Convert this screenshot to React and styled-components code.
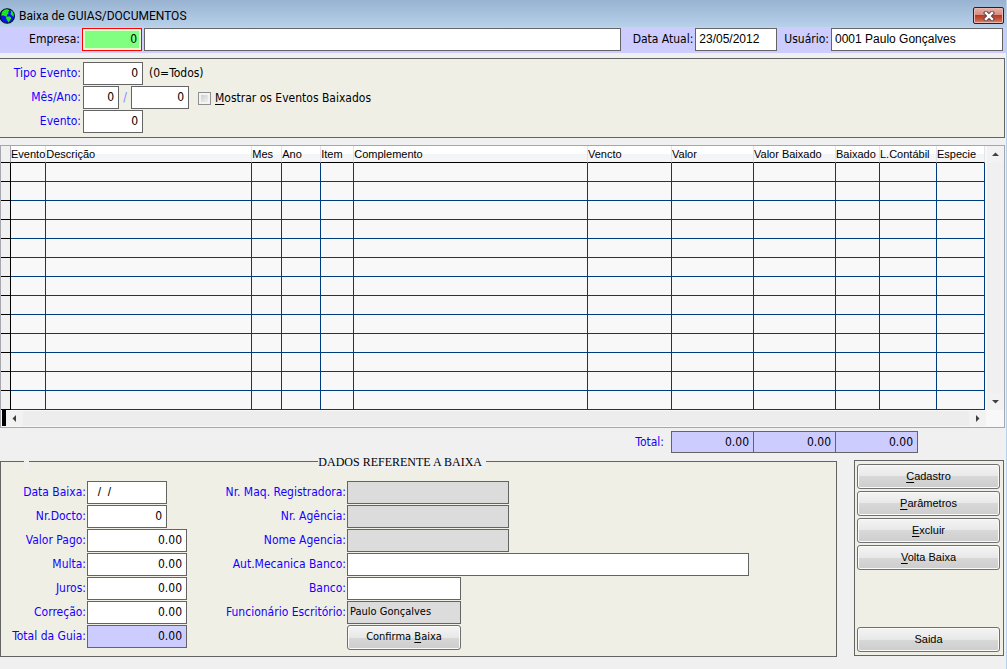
import React from 'react';
import styled, { createGlobalStyle } from 'styled-components';

const COLORS = {
  window: '#f0f0f0',
  panel: '#efefe6',
  lavender: '#ccccff',
  border: '#646464',
  label: '#1400ff',
  gridLine: '#003c7d',
  disabled: '#dcdcdc',
};

const FONTS = {
  ui: "'DejaVu Sans Condensed', 'DejaVu Sans', sans-serif",
  title: "Roboto, 'Noto Sans', sans-serif",
  arial: "'Liberation Sans', Arial, sans-serif",
  serif: "'Liberation Serif', 'Times New Roman', serif",
};

const COLUMNS = [
  { title: 'Evento', width: 35 },
  { title: 'Descrição', width: 206 },
  { title: 'Mes', width: 30 },
  { title: 'Ano', width: 39 },
  { title: 'Item', width: 33 },
  { title: 'Complemento' },
  { title: 'Vencto', width: 84 },
  { title: 'Valor', width: 82 },
  { title: 'Valor Baixado', width: 82 },
  { title: 'Baixado', width: 44 },
  { title: 'L.Contábil', width: 57 },
  { title: 'Especie', width: 48 },
];

const ROWS = Array.from({ length: 13 }, (_, i) => i);

const PAYMENT_FIELDS = [
  { id: 'data-baixa', label: 'Data Baixa:', value: '  /  /', width: 80, font: 'arial' },
  { id: 'nr-docto', label: 'Nr.Docto:', value: '0', width: 80, align: 'right' },
  { id: 'valor-pago', label: 'Valor Pago:', value: '0.00', width: 100, align: 'right' },
  { id: 'multa', label: 'Multa:', value: '0.00', width: 100, align: 'right' },
  { id: 'juros', label: 'Juros:', value: '0.00', width: 100, align: 'right' },
  { id: 'correcao', label: 'Correção:', value: '0.00', width: 100, align: 'right' },
  { id: 'total-guia', label: 'Total da Guia:', value: '0.00', width: 100, align: 'right', tone: 'total', readOnly: true },
];

const BANK_FIELDS = [
  { id: 'nr-maq', label: 'Nr. Maq. Registradora:', width: 162, tone: 'disabled', readOnly: true },
  { id: 'nr-agencia', label: 'Nr. Agência:', width: 162, tone: 'disabled', readOnly: true },
  { id: 'nome-agencia', label: 'Nome Agencia:', width: 162, tone: 'disabled', readOnly: true },
  { id: 'aut-mecanica', label: 'Aut.Mecanica Banco:' },
  { id: 'banco', label: 'Banco:', width: 114 },
  { id: 'funcionario', label: 'Funcionário Escritório:', value: 'Paulo Gonçalves', width: 114, tone: 'disabled', small: true, readOnly: true },
];

const Field = ({ id, label, labelWidth, value = '', ...rest }) => (
  <FieldRow>
    <Label htmlFor={id} $width={labelWidth}>{label}</Label>
    <TextBox id={id} value={value} {...rest} />
  </FieldRow>
);

const TextBox = ({ id, value = '', width, align, tone, font, small, readOnly, ...rest }) => (
  <Input
    id={id}
    type="text"
    defaultValue={value}
    readOnly={readOnly}
    $width={width}
    $align={align}
    $tone={tone}
    $font={font}
    $small={small}
    {...rest}
  />
);

const Globe = () => (
  <GlobeSvg viewBox="0 0 16 16" aria-hidden="true">
    <circle cx="7.2" cy="8" r="7.2" fill="#0a14f0" stroke="#001030" strokeWidth="1.2" />
    <path d="M2 4 L4.6 1.6 L8 1.2 L9.4 2.4 L8.2 4 L8.6 5.4 L6.8 7 L7.4 8.6 L5.6 8.4 L3.6 7.6 L1.2 7.4 Z" fill="#1ee61e" />
    <path d="M6.4 8.4 L10 8.6 L11.4 10.2 L10 12.6 L8.4 14.6 L7.4 12.4 L6 10.6 Z" fill="#1ee61e" />
    <path d="M10.4 2 L12.6 3.6 L13.8 6.4 L13.6 9 L12 7.6 L10.4 6 L11.2 4.4 Z" fill="#1ee61e" />
  </GlobeSvg>
);

const Arrow = ({ points }) => (
  <svg width="7" height="7" viewBox="0 0 7 7" aria-hidden="true">
    <polygon points={points} fill="#404040" />
  </svg>
);

const App = () => (
  <>
    <GlobalStyle />
    <Window>
      <TitleBar>
        <Globe />
        <Title>Baixa de GUIAS/DOCUMENTOS</Title>
        <CloseButton type="button" aria-label="Fechar">
          <svg width="12" height="10" viewBox="0 0 12 10" aria-hidden="true">
            <path d="M3 2 L9 8 M9 2 L3 8" stroke="#5a4650" strokeWidth="4.4" strokeLinecap="square" />
            <path d="M3 2 L9 8 M9 2 L3 8" stroke="#ffffff" strokeWidth="2.4" strokeLinecap="square" />
          </svg>
        </CloseButton>
      </TitleBar>

      <CompanyBar>
        <Label htmlFor="empresa" $width={80} $dark>Empresa:</Label>
        <ActiveInput id="empresa" type="text" defaultValue="0" />
        <TextBox id="empresa-nome" aria-label="Nome da empresa" />
        <BarGroup $offset={10}>
          <Label htmlFor="data-atual" $dark>Data Atual:</Label>
          <TextBox id="data-atual" value="23/05/2012" width={82} font="arial" />
        </BarGroup>
        <BarGroup $offset={5}>
          <Label htmlFor="usuario" $dark>Usuário:</Label>
          <TextBox id="usuario" value="0001 Paulo Gonçalves" width={172} font="arial" />
        </BarGroup>
      </CompanyBar>

      <FilterPanel>
        <FieldRow>
          <Label htmlFor="tipo-evento" $width={81}>Tipo Evento:</Label>
          <TextBox id="tipo-evento" value="0" width={60} align="right" />
          <Hint>(0=Todos)</Hint>
        </FieldRow>
        <FieldRow>
          <Label htmlFor="mes" $width={81}>Mês/Ano:</Label>
          <TextBox id="mes" value="0" width={36} align="right" />
          <Slash>/</Slash>
          <TextBox id="ano" aria-label="Ano" value="0" width={58} align="right" />
          <CheckLabel>
            <Checkbox type="checkbox" />
            <span><u>M</u>ostrar os Eventos Baixados</span>
          </CheckLabel>
        </FieldRow>
        <FieldRow>
          <Label htmlFor="evento" $width={81}>Evento:</Label>
          <TextBox id="evento" value="0" width={60} align="right" />
        </FieldRow>
      </FilterPanel>

      <Grid>
        <GridBody>
          <Table>
            <colgroup>
              <Col $width={10} />
              {COLUMNS.map(({ title, width }) => <Col key={title} $width={width} />)}
            </colgroup>
            <thead>
              <tr>
                <HeadSelector />
                {COLUMNS.map(({ title }) => <HeadCell key={title}>{title}</HeadCell>)}
              </tr>
            </thead>
            <tbody>
              {ROWS.map((row) => (
                <tr key={row}>
                  <Selector />
                  {COLUMNS.map(({ title }) => <Cell key={title} />)}
                </tr>
              ))}
            </tbody>
          </Table>
          <VerticalScroll>
            <ScrollButton type="button" aria-label="Subir"><Arrow points="0,5 3.5,1.5 7,5" /></ScrollButton>
            <ScrollButton type="button" aria-label="Descer"><Arrow points="0,2 3.5,5.5 7,2" /></ScrollButton>
          </VerticalScroll>
        </GridBody>
        <GridFooter>
          <SplitHandle />
          <HorizontalScroll>
            <ScrollButton type="button" aria-label="Esquerda"><Arrow points="5,0 1.5,3.5 5,7" /></ScrollButton>
            <ScrollButton type="button" aria-label="Direita"><Arrow points="2,0 5.5,3.5 2,7" /></ScrollButton>
          </HorizontalScroll>
        </GridFooter>
      </Grid>

      <Totals>
        <Label htmlFor="total-valor">Total:</Label>
        <TotalBox id="total-valor" type="text" readOnly defaultValue="0.00" />
        <TotalBox aria-label="Total valor baixado" type="text" readOnly defaultValue="0.00" />
        <TotalBox aria-label="Total baixado" type="text" readOnly defaultValue="0.00" />
      </Totals>

      <Bottom>
        <Details>
          <Legend>DADOS REFERENTE A BAIXA</Legend>
          <DetailColumns>
            <FieldStack>
              {PAYMENT_FIELDS.map((field) => <Field key={field.id} labelWidth={85} {...field} />)}
            </FieldStack>
            <WideStack>
              {BANK_FIELDS.map((field) => <Field key={field.id} labelWidth={159} {...field} />)}
              <ConfirmButton type="button">Confirma <u>B</u>aixa</ConfirmButton>
            </WideStack>
          </DetailColumns>
        </Details>

        <Actions>
          <Button type="button"><u>C</u>adastro</Button>
          <Button type="button"><u>P</u>arâmetros</Button>
          <Button type="button"><u>E</u>xcluir</Button>
          <Button type="button"><u>V</u>olta Baixa</Button>
          <ExitButton type="button">Saida</ExitButton>
        </Actions>
      </Bottom>
    </Window>
  </>
);

const GlobalStyle = createGlobalStyle`
  *, *::before, *::after {
    box-sizing: border-box;
  }

  body {
    margin: 0;
    background-color: ${COLORS.window};
    font-family: ${FONTS.ui};
    font-size: 12px;
    line-height: 16px;
    color: #000;
  }

  u {
    text-underline-offset: 2px;
  }
`;

const Window = styled.div`
  min-height: 100vh;
  border-right: 1px solid #b9d1ea;
`;

//#region title and company bars
const TitleBar = styled.header`
  display: flex;
  align-items: center;
  height: 27px;
  padding: 4px 2px 0 0;
  background: linear-gradient(#98b3d1, #b8d0ea);
`;

const GlobeSvg = styled.svg`
  flex: none;
  width: 16px;
  height: 16px;
`;

const Title = styled.h1`
  flex: 1;
  margin: 0 0 0 3px;
  font-family: ${FONTS.title};
  font-size: 12px;
  font-weight: 400;
`;

const CloseButton = styled.button`
  display: flex;
  align-items: center;
  justify-content: center;
  width: 31px;
  height: 17px;
  padding: 0;
  border: 1px solid #431422;
  border-radius: 2px;
  background: linear-gradient(#eab0a6 0%, #d98c80 45%, #b33c26 50%, #c8543a 75%, #d98a70 100%);
  box-shadow: inset 0 0 0 1px #e8b8ae;
`;

const CompanyBar = styled.div`
  display: flex;
  align-items: flex-start;
  gap: 2px;
  height: 26px;
  padding: 1px 3px 0 0;
  background-color: ${COLORS.lavender};
`;

const BarGroup = styled.div`
  display: flex;
  gap: 2px;
  margin-left: ${({ $offset }) => $offset}px;
`;
//#endregion

//#region form parts
const Label = styled.label`
  flex: none;
  width: ${({ $width }) => ($width ? `${$width}px` : 'auto')};
  text-align: right;
  white-space: nowrap;
  line-height: 22px;
  color: ${({ $dark }) => ($dark ? '#000' : COLORS.label)};
`;

const TONES = {
  total: COLORS.lavender,
  disabled: COLORS.disabled,
};

const Input = styled.input`
  flex: ${({ $width }) => ($width ? 'none' : 1)};
  min-width: 0;
  width: ${({ $width }) => ($width ? `${$width}px` : 'auto')};
  height: 23px;
  margin: 0;
  padding: ${({ $align, $small }) => ($align ? '0 4px 1px 2px' : $small ? '0 2px 2px' : '0 3px 1px')};
  border: 1px solid ${COLORS.border};
  border-radius: 0;
  background-color: ${({ $tone }) => TONES[$tone] || '#fff'};
  font-family: ${({ $font }) => FONTS[$font || 'ui']};
  font-size: ${({ $small }) => ($small ? 11 : 12)}px;
  text-align: ${({ $align }) => $align || 'left'};
  color: #000;
  outline: none;
`;

const ActiveInput = styled.input`
  flex: none;
  width: 60px;
  height: 23px;
  padding: 0 4px 1px 2px;
  border: 1px solid #ff0000;
  background-color: #80ff80;
  box-shadow: inset 0 0 0 2px #e8ffd0;
  font-family: ${FONTS.ui};
  font-size: 12px;
  text-align: right;
  outline: none;
`;

const FieldRow = styled.div`
  display: flex;
  gap: 2px;
`;

const FilterPanel = styled.section`
  display: flex;
  flex-direction: column;
  gap: 1px;
  margin: 5px 1px 0 0;
  padding: 3px 0 4px;
  border: 1px solid ${COLORS.border};
  border-left: 0;
  background-color: ${COLORS.panel};
`;

const Hint = styled.span`
  margin-left: 4px;
  line-height: 22px;
`;

const Slash = styled.span`
  width: 8px;
  text-align: center;
  line-height: 22px;
  color: #8080ff;
`;

const CheckLabel = styled.label`
  display: flex;
  align-items: center;
  gap: 4px;
  margin-left: 7px;
  padding-top: 1px;
`;

const Checkbox = styled.input`
  appearance: none;
  width: 13px;
  height: 13px;
  margin: 0;
  border: 1px solid #8e8f8f;
  background: linear-gradient(135deg, #c4c8cc, #f6f6f6);
  box-shadow: inset 0 0 0 2px #f4f4f4;
`;
//#endregion

//#region events grid
const Grid = styled.section`
  margin: 7px 1px 0 0;
  border: 1px solid #a6a6ac;
  background-color: #f8f8f8;
`;

const GridBody = styled.div`
  display: flex;
  gap: 2px;
`;

const Table = styled.table`
  flex: 1;
  table-layout: fixed;
  border-collapse: separate;
  border-spacing: 0;
  font-family: ${FONTS.arial};
  font-size: 11px;
`;

const Col = styled.col`
  width: ${({ $width }) => ($width ? `${$width}px` : 'auto')};
`;

const HeadCell = styled.th`
  height: 17px;
  padding: 0;
  border-right: 1px solid #e4e4e8;
  border-bottom: 1px solid #000;
  background: linear-gradient(#fff 50%, #f4f5f7 50%);
  line-height: 16px;
  font-weight: 400;
  text-align: left;
  white-space: nowrap;
`;

const HeadSelector = styled.td`
  padding: 0;
  border-right: 1px solid #a6a6ac;
  border-bottom: 1px solid #000;
  background-color: ${COLORS.window};
`;

const Cell = styled.td`
  height: 19px;
  padding: 0;
  border-right: 1px solid ${COLORS.gridLine};
  border-bottom: 1px solid ${COLORS.gridLine};
`;

const Selector = styled.td`
  padding: 0;
  border-right: 1px solid #000;
  border-bottom: 1px solid #000;
  background-color: ${COLORS.window};
`;

const VerticalScroll = styled.div`
  display: flex;
  flex-direction: column;
  justify-content: space-between;
  flex: none;
  width: 17px;
  background-color: #f0f0f0;
`;

const ScrollButton = styled.button`
  display: flex;
  align-items: center;
  justify-content: center;
  width: 17px;
  height: 17px;
  padding: 0;
  border: 0;
  background-color: #f2f2f2;
`;

const GridFooter = styled.div`
  display: flex;
  height: 17px;
  padding: 0 18px 1px 1px;
`;

const SplitHandle = styled.div`
  width: 4px;
  background-color: #000;
`;

const HorizontalScroll = styled.div`
  display: flex;
  align-items: center;
  justify-content: space-between;
  flex: 1;
  height: 15px;
  margin-top: 1px;
  overflow: hidden;
  background-color: #ededed;
`;
//#endregion

const Totals = styled.div`
  display: flex;
  justify-content: flex-end;
  margin-top: 3px;
  padding-right: 88px;

  ${Label} {
    margin-right: 7px;
  }
`;

const TotalBox = styled.input`
  width: 83px;
  height: 22px;
  padding: 0 4px 1px 2px;
  border: 1px solid ${COLORS.border};
  background-color: ${COLORS.lavender};
  font-family: ${FONTS.ui};
  font-size: 12px;
  text-align: right;

  & + & {
    width: 82px;
    border-left: 0;
  }
`;

//#region write-off details
const Bottom = styled.div`
  display: flex;
  gap: 17px;
  padding-right: 2px;
`;

// the notch near the left corner hangs over the top border
const Details = styled.fieldset`
  position: relative;
  flex: 1;
  min-width: 0;
  margin: 0;
  padding: 12px 0 6px;
  border: 1px solid ${COLORS.border};
  background-color: ${COLORS.panel};

  &::before {
    content: '';
    position: absolute;
    top: -14px;
    left: 23px;
    width: 5px;
    height: 15px;
    background-color: ${COLORS.window};
  }
`;

const Legend = styled.legend`
  height: 16px;
  margin-left: 38%;
  padding: 0 4px 0 0;
  background-color: ${COLORS.window};
  font-family: ${FONTS.serif};
  font-size: 12px;
  line-height: 18px;
`;

const DetailColumns = styled.div`
  display: flex;
`;

const FieldStack = styled.div`
  display: flex;
  flex-direction: column;
  gap: 1px;
  width: 186px;

  ${FieldRow} {
    gap: 1px;
  }
`;

const WideStack = styled(FieldStack)`
  flex: 1;
  width: auto;
  padding-right: 87px;
`;

const Button = styled.button`
  height: 25px;
  padding: 0 2px 2px;
  border: 1px solid #707070;
  border-radius: 3px;
  background: linear-gradient(#f4f4f4 0%, #e8e8e8 50%, #d8d8d8 50%, #cdcdcd 100%);
  box-shadow: inset 0 0 0 1px #fafafa;
  font-family: ${FONTS.arial};
  font-size: 11px;
  color: #000;
`;

const ConfirmButton = styled(Button)`
  width: 114px;
  margin-left: 160px;
  font-family: ${FONTS.ui};
`;

const Actions = styled.nav`
  display: flex;
  flex-direction: column;
  gap: 2px;
  width: 150px;
  margin: 7px 0 1px;
  padding: 3px 3px 3px 2px;
  border: 1px solid ${COLORS.border};
  background-color: ${COLORS.panel};
`;

const ExitButton = styled(Button)`
  margin-top: auto;
`;
//#endregion

export default App;
